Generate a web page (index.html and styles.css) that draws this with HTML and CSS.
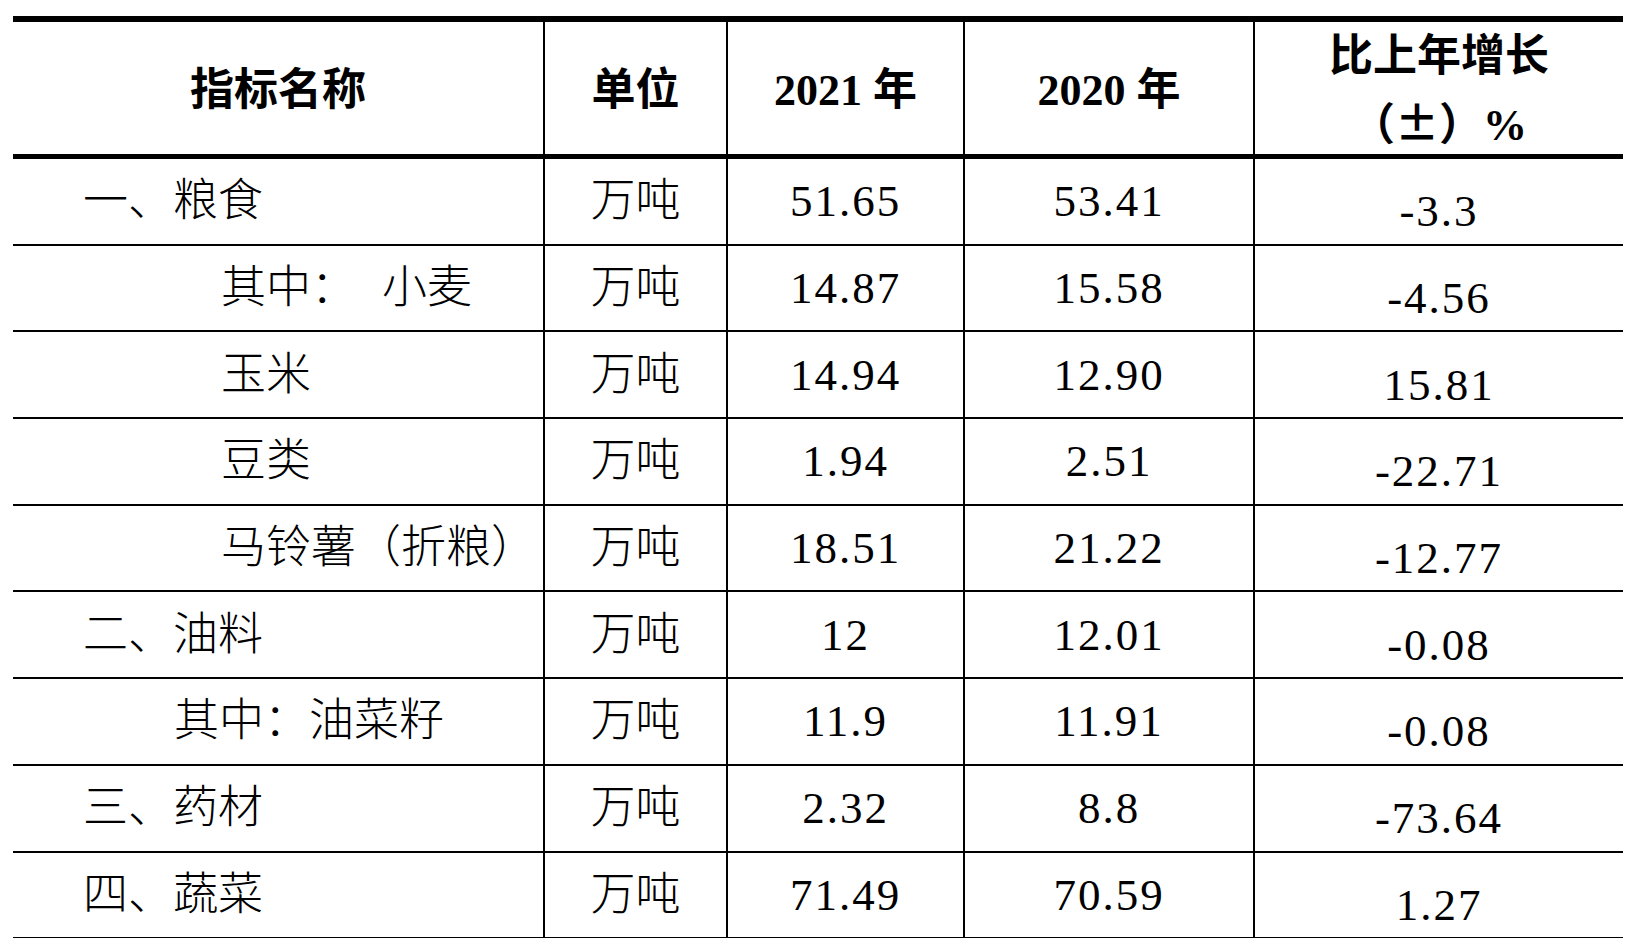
FILE: index.html
```html
<!DOCTYPE html>
<html lang="zh-CN">
<head>
<meta charset="utf-8">
<title>主要农产品产量</title>
<link rel="stylesheet" href="styles.css">
</head>
<body>
<table class="stats">
  <colgroup>
    <col class="c-name">
    <col class="c-unit">
    <col class="c-y1">
    <col class="c-y2">
    <col class="c-rate">
  </colgroup>
  <thead>
    <tr>
      <th>指标名称</th>
      <th>单位</th>
      <th>2021 年</th>
      <th>2020 年</th>
      <th class="rate-h"><span class="line">比上年增长</span><span class="line"><span class="cjk">（±）</span>%</span></th>
    </tr>
  </thead>
  <tbody>
    <tr><td class="name l1">一、粮食</td><td>万吨</td><td class="num">51.65</td><td class="num">53.41</td><td class="num rate">-3.3</td></tr>
    <tr><td class="name l3">其中：<span class="gap">小麦</span></td><td>万吨</td><td class="num">14.87</td><td class="num">15.58</td><td class="num rate">-4.56</td></tr>
    <tr><td class="name l3">玉米</td><td>万吨</td><td class="num">14.94</td><td class="num">12.90</td><td class="num rate">15.81</td></tr>
    <tr><td class="name l3">豆类</td><td>万吨</td><td class="num">1.94</td><td class="num">2.51</td><td class="num rate">-22.71</td></tr>
    <tr><td class="name l3">马铃薯（折粮）</td><td>万吨</td><td class="num">18.51</td><td class="num">21.22</td><td class="num rate">-12.77</td></tr>
    <tr><td class="name l1">二、油料</td><td>万吨</td><td class="num">12</td><td class="num">12.01</td><td class="num rate">-0.08</td></tr>
    <tr><td class="name l2">其中：油菜籽</td><td>万吨</td><td class="num">11.9</td><td class="num">11.91</td><td class="num rate">-0.08</td></tr>
    <tr><td class="name l1">三、药材</td><td>万吨</td><td class="num">2.32</td><td class="num">8.8</td><td class="num rate">-73.64</td></tr>
    <tr><td class="name l1">四、蔬菜</td><td>万吨</td><td class="num">71.49</td><td class="num">70.59</td><td class="num rate">1.27</td></tr>
  </tbody>
</table>
</body>
</html>
```

FILE: styles.css
```css
html, body {
  margin: 0;
  padding: 0;
  background: #ffffff;
}

body {
  padding: 16px 0 0 13px;
  color: #000000;
  font-family: "Liberation Serif", "Noto Sans CJK SC", serif;
}

.stats {
  border-collapse: separate;
  border-spacing: 0;
  table-layout: fixed;
  width: 1610px;
}

.c-name { width: 530px; }
.c-unit { width: 183px; }
.c-y1 { width: 237px; }
.c-y2 { width: 290px; }
.c-rate { width: 370px; }

.stats th,
.stats td {
  box-sizing: border-box;
  padding: 0;
  text-align: center;
  vertical-align: middle;
  white-space: nowrap;
}

.stats th + th,
.stats td + td {
  border-left: 2px solid #000;
}

.stats th {
  height: 142px;
  padding-top: 5px;
  border-top: 6px solid #000;
  border-bottom: 5px solid #000;
  font-family: "Liberation Serif", "Noto Sans CJK SC", sans-serif;
  font-size: 44px;
  font-weight: 700;
  line-height: 64px;
}

.stats th.rate-h {
  padding-top: 2px;
}

.rate-h .line {
  display: block;
  height: 65px;
  line-height: 65px;
  overflow: hidden;
}

.cjk {
  font-family: "Noto Sans CJK SC", sans-serif;
}

.stats td {
  height: 86.7px;
  border-bottom: 2px solid #000;
  font-size: 45px;
  font-weight: 300;
  line-height: 50px;
}

.stats td.name {
  text-align: left;
}

.stats td.l1 { padding-left: 70px; }
.stats td.l2 { padding-left: 161px; }
.stats td.l3 { padding-left: 208px; }

.gap {
  margin-left: 26px;
}

.stats td.num {
  letter-spacing: 2px;
}

.stats td.rate {
  padding-top: 20px;
}
```
